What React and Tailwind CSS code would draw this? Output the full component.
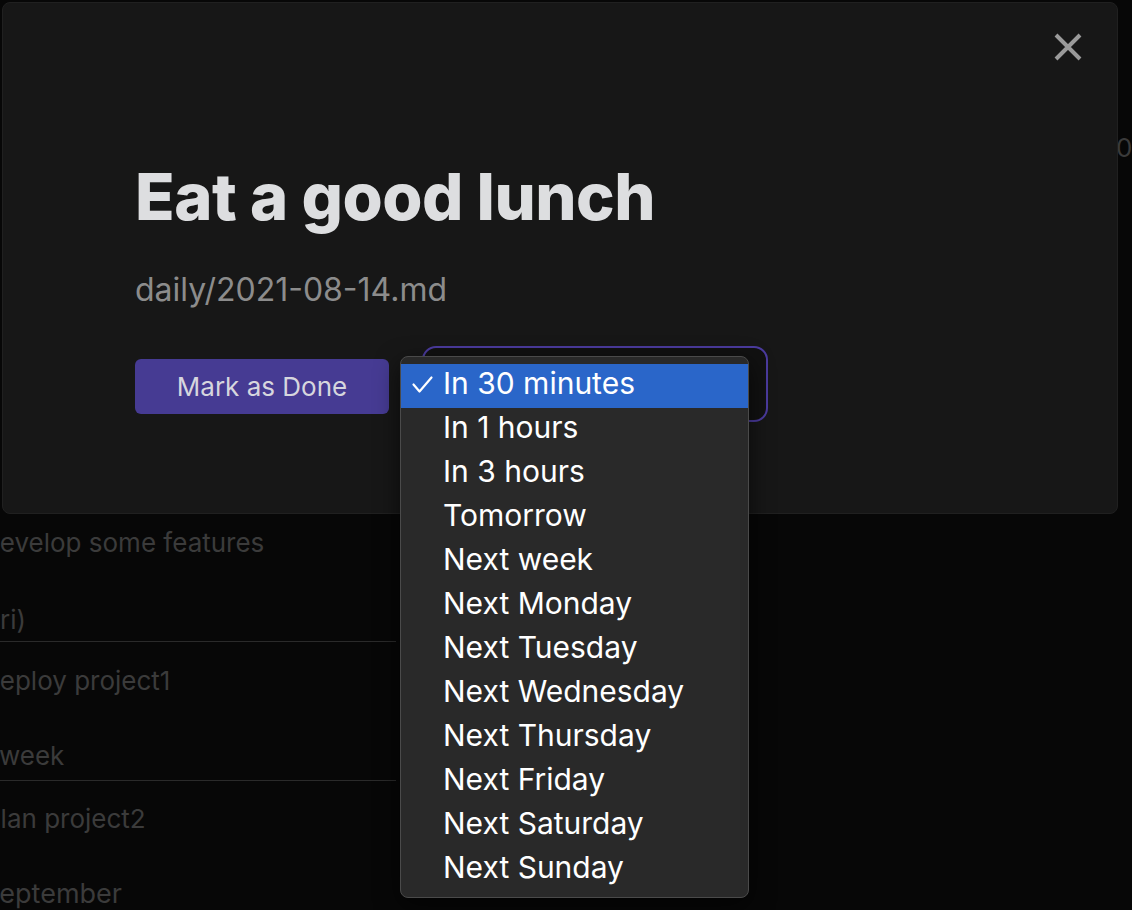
import React from "react";

const items = [
  "In 30 minutes",
  "In 1 hours",
  "In 3 hours",
  "Tomorrow",
  "Next week",
  "Next Monday",
  "Next Tuesday",
  "Next Wednesday",
  "Next Thursday",
  "Next Friday",
  "Next Saturday",
  "Next Sunday",
];

export default function App() {
  return (
    <div
      className="relative w-[1132px] h-[910px] overflow-hidden bg-[#070707]"
      style={{ fontFamily: "Inter, 'Noto Sans', sans-serif" }}
    >
      {/* background list */}
      <div className="flex flex-col pt-[523px] text-[26px] text-[#3b3b3b] w-[396px]">
        <div className="h-[40px] leading-[40px] -ml-[19px] whitespace-nowrap">Develop some features</div>
        <div className="mt-[37px] h-[42px] leading-[40px] border-b border-[#2a2a2a] whitespace-nowrap">
          <span className="-ml-[24px]">(Fri)</span>
        </div>
        <div className="mt-[19px] h-[40px] leading-[40px] -ml-[19px] whitespace-nowrap">Deploy project1</div>
        <div className="mt-[35px] h-[45px] leading-[40px] border-b border-[#2a2a2a] whitespace-nowrap">
          <span className="-ml-[1px]">week</span>
        </div>
        <div className="mt-[18px] h-[40px] leading-[40px] -ml-[16px] whitespace-nowrap">Plan project2</div>
        <div className="mt-[35px] h-[40px] leading-[40px] -ml-[18px] text-[27px] whitespace-nowrap">September</div>
      </div>

      {/* right edge dim glyph */}
      <div className="absolute left-[1116px] top-[128px] text-[26px] text-[#3a3a3a]">0</div>

      {/* modal */}
      <div className="absolute left-[2px] top-[2px] w-[1116px] h-[512px] rounded-[8px] bg-[#171717] border border-[#202020]">
        <button className="absolute left-[1049px] top-[28px] w-[32px] h-[32px] flex items-center justify-center">
          <svg width="30" height="30" viewBox="0 0 30 30">
            <path d="M3 3 L27 27 M27 3 L3 27" stroke="#9a9a9a" strokeWidth="4" />
          </svg>
        </button>

        <div className="flex flex-col pl-[132px] pt-[154px]">
          <h1 className="text-[65px] leading-[80px] font-extrabold text-[#dddee0] tracking-[-0.5px]">
            Eat a good lunch
          </h1>
          <div className="mt-[33px] text-[32px] leading-[40px] text-[#8c8c8c]">daily/2021-08-14.md</div>
          <div className="mt-[36px] flex items-start">
            <button className="mt-[13px] w-[254px] h-[55px] rounded-[6px] bg-[#463b93] text-[#d6d6de] text-[26px]">
              Mark as Done
            </button>
            <div className="ml-[33px] w-[346px] h-[76px] rounded-[14px] border-2 border-[#4b3b9e] bg-[#111111]" />
          </div>
        </div>
      </div>

      {/* dropdown menu */}
      <div className="absolute left-[400px] top-[356px] w-[349px] h-[542px] rounded-[8px] bg-[#292929] border border-[#4a4a4a] shadow-[0_8px_24px_rgba(0,0,0,0.6)] pt-[7px]">
        {items.map((t, i) => (
          <div
            key={t}
            className={
              i === 0
                ? "relative h-[44px] leading-[40px] flex items-center bg-[#2a66c9] text-white text-[30px] pl-[42px] pb-[6px]"
                : "relative h-[44px] leading-[40px] flex items-center text-white text-[30px] pl-[42px] pb-[6px]"
            }
          >
            {i === 0 && (
              <svg className="absolute left-[11px] top-[12px]" width="21" height="17" viewBox="0 0 21 17">
                <path d="M1.5 8.5 L7.5 15.5 L19.5 1.5" fill="none" stroke="white" strokeWidth="2.2" strokeLinecap="round" strokeLinejoin="round" />
              </svg>
            )}
            {t}
          </div>
        ))}
      </div>
    </div>
  );
}
